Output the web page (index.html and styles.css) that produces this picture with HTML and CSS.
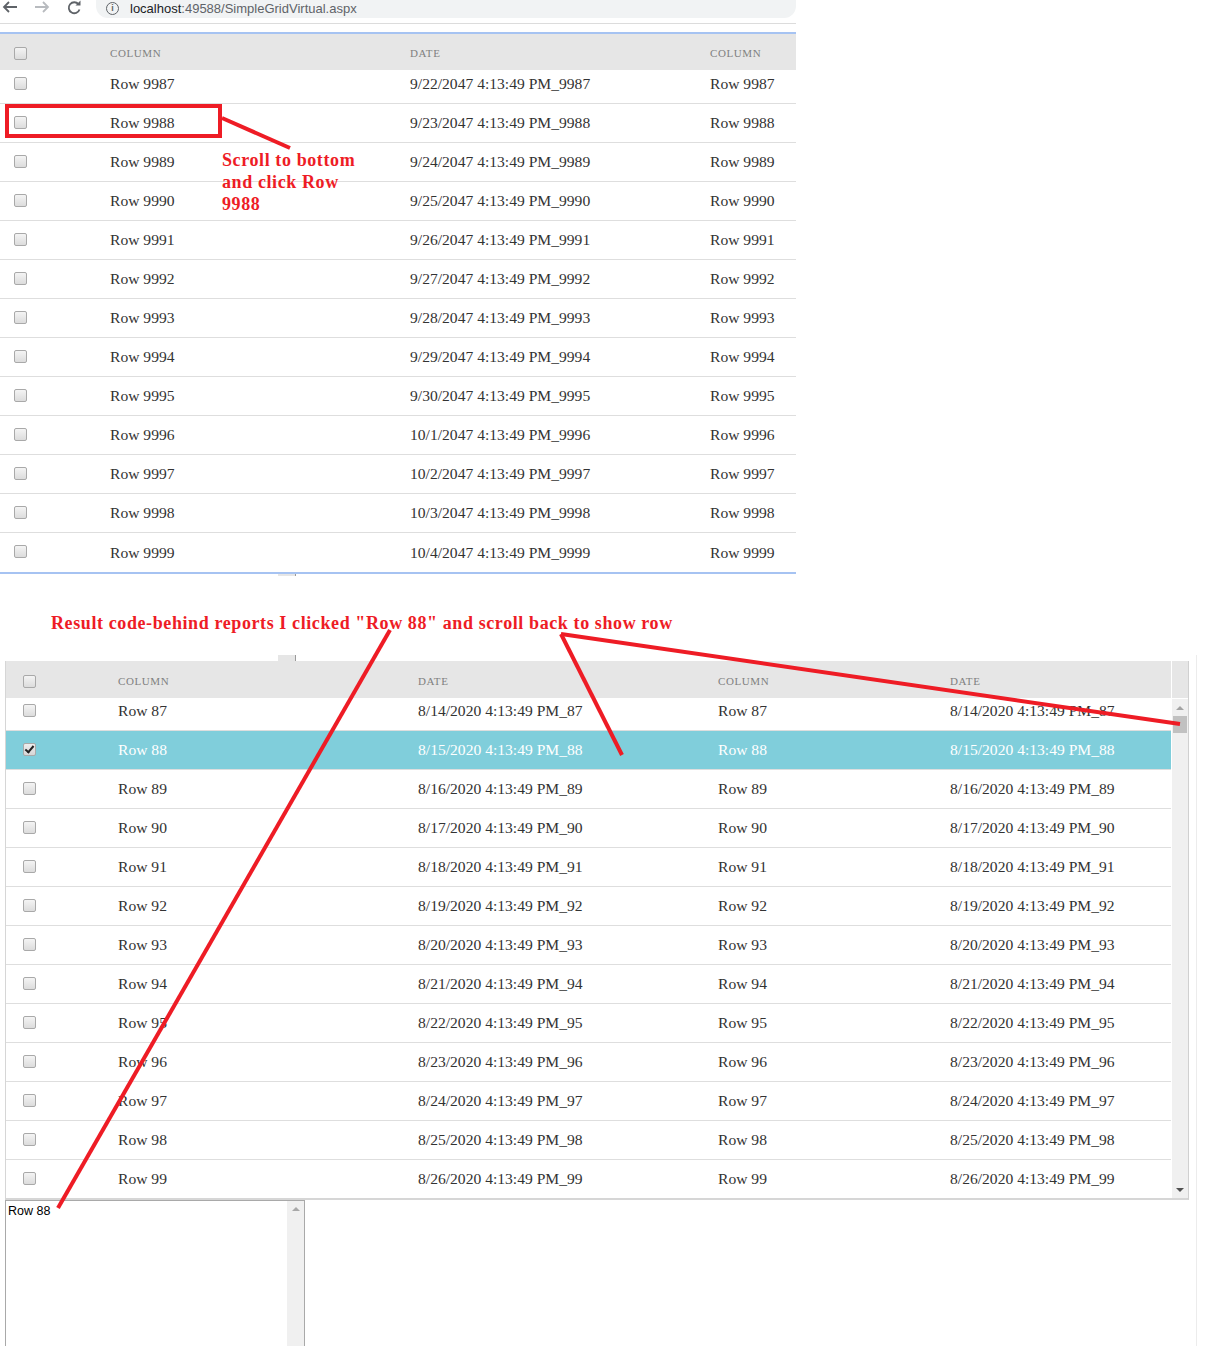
FILE: index.html
```html
<!DOCTYPE html>
<html>
<head>
<meta charset="utf-8">
<title>SimpleGridVirtual</title>
<link rel="stylesheet" href="styles.css">
</head>
<body>
<div class="page">
  <div class="chrome">
    <svg class="nav" width="90" height="20" viewBox="0 0 90 20">
      <path d="M17 7 H4 M9 2 L4 7 L9 12" fill="none" stroke="#5f6368" stroke-width="1.8"/>
      <path d="M35 7 H48 M43 2 L48 7 L43 12" fill="none" stroke="#b8bbbf" stroke-width="1.8"/>
      <path d="M78.5 4.2 A5.5 5.5 0 1 0 79.5 9.5" fill="none" stroke="#5f6368" stroke-width="1.8"/>
      <path d="M80.5 0.5 V5.5 H75.5 Z" fill="#5f6368"/>
    </svg>
    <div class="omnibox">
      <span class="info">i</span>
      <span class="url"><span class="host">localhost</span>:49588/SimpleGridVirtual.aspx</span>
    </div>
  </div>

  <div class="grid grid-one">
    <div class="head row">
      <span class="cell"><span class="cb"></span></span>
      <span class="cell hd">COLUMN</span>
      <span class="cell hd">DATE</span>
      <span class="cell hd">COLUMN</span>
    </div>
    <div class="body body-one">
      <div class="rows" id="rows1"></div>
    </div>
    <span class="tick tick-one"></span>
  </div>

  <div class="gap"></div>

  <div class="lower">
    <span class="tick tick-two"></span>
    <div class="grid grid-two">
      <div class="main">
        <div class="head row">
          <span class="cell"><span class="cb"></span></span>
          <span class="cell hd">COLUMN</span>
          <span class="cell hd">DATE</span>
          <span class="cell hd">COLUMN</span>
          <span class="cell hd">DATE</span>
        </div>
        <div class="body body-two">
          <div class="rows" id="rows2"></div>
        </div>
      </div>
      <div class="vscroll">
        <div class="vs-head"></div>
        <div class="vs-track">
          <span class="arr up"></span>
          <span class="thumb"></span>
          <span class="fill"></span>
          <span class="arr down"></span>
        </div>
      </div>
    </div>
    <div class="output">
      <div class="out-text">Row 88</div>
      <div class="out-scroll"><span class="arr up light"></span></div>
    </div>
  </div>

  <div class="note note-one">Scroll to bottom<br>and click Row<br>9988</div>
  <div class="note note-two">Result code-behind reports I clicked "Row 88" and scroll back to show row</div>

  <svg class="marks" width="1212" height="1346" viewBox="0 0 1212 1346">
    <g fill="none" stroke="#ee1c25" stroke-width="4">
      <rect x="7" y="106" width="213" height="30"/>
      <path d="M222 118 L290 148"/>
      <path d="M390 630 L58 1208"/>
      <path d="M561 634 L622 755"/>
      <path d="M561 634 L1180 724"/>
    </g>
  </svg>
</div>
<script src="app.js"></script>
</body>
</html>
```

FILE: app.js
```javascript
(function () {
  function row(cells, cls, checked) {
    var r = document.createElement('div');
    r.className = 'row data' + (cls ? ' ' + cls : '');
    var c0 = document.createElement('span');
    c0.className = 'cell';
    var cb = document.createElement('span');
    cb.className = 'cb' + (checked ? ' on' : '');
    c0.appendChild(cb);
    r.appendChild(c0);
    cells.forEach(function (t) {
      var s = document.createElement('span');
      s.className = 'cell txt';
      s.textContent = t;
      r.appendChild(s);
    });
    return r;
  }
  var r1 = document.getElementById('rows1');
  var d1 = new Date(2047, 8, 22);
  for (var i = 9987; i <= 9999; i++) {
    var d = new Date(d1.getTime());
    d.setDate(d1.getDate() + (i - 9987));
    var ds = (d.getMonth() + 1) + '/' + d.getDate() + '/' + d.getFullYear() + ' 4:13:49 PM_' + i;
    r1.appendChild(row(['Row ' + i, ds, 'Row ' + i]));
  }
  var r2 = document.getElementById('rows2');
  var d2 = new Date(2020, 7, 14);
  for (var j = 87; j <= 99; j++) {
    var e = new Date(d2.getTime());
    e.setDate(d2.getDate() + (j - 87));
    var es = (e.getMonth() + 1) + '/' + e.getDate() + '/' + e.getFullYear() + ' 4:13:49 PM_' + j;
    r2.appendChild(row(['Row ' + j, es, 'Row ' + j, es], j === 88 ? 'sel' : '', j === 88));
  }
})();
```

FILE: styles.css
```css
html, body {
  margin: 0;
  padding: 0;
  background: #fff;
}
.page {
  position: relative;
  width: 1212px;
  height: 1346px;
  overflow: hidden;
  font-family: "Liberation Serif", serif;
  color: #333;
}
.chrome {
  display: flex;
  align-items: flex-start;
  height: 24px;
  width: 796px;
  border-bottom: 1px solid #dcdcdc;
  box-sizing: border-box;
}
.nav {
  display: block;
  flex: none;
}
.omnibox {
  margin-left: 6px;
  width: 700px;
  height: 20px;
  margin-top: -2px;
  background: #f1f3f4;
  border-radius: 0 0 12px 12px;
  display: flex;
  align-items: center;
  font-family: "Liberation Sans", sans-serif;
  font-size: 13px;
  color: #5f6368;
}
.info {
  width: 11px;
  height: 11px;
  border: 1.5px solid #5f6368;
  border-radius: 50%;
  margin-left: 10px;
  margin-right: 11px;
  font-size: 9px;
  font-weight: bold;
  line-height: 11px;
  text-align: center;
  color: #5f6368;
}
.host { color: #202124; }

.grid-one {
  position: relative;
  margin-top: 8px;
  width: 796px;
  border-top: 2px solid #a6c3f2;
  border-bottom: 2px solid #a6c3f2;
}
.row {
  display: grid;
  align-items: center;
}
.grid-one .row { grid-template-columns: 110px 300px 300px 86px; }
.grid-two .row { grid-template-columns: 112px 300px 300px 232px 221px; }
.head {
  height: 36px;
  background: #e6e6e6;
}
.grid-two .head { height: 37px; }
.head .cb { margin-top: 3px; }
.hd {
  font-size: 11px;
  letter-spacing: 0.6px;
  color: #808080;
  padding-top: 2px;
}
.cell { white-space: nowrap; }
.cb {
  display: block;
  width: 11px;
  height: 11px;
  border: 1px solid #a9a9a9;
  border-radius: 2px;
  background: linear-gradient(#f4f4f4, #dcdcdc);
}
.grid-one .cb { margin-left: 14px; }
.grid-two .cb { margin-left: 17px; }
.cb.on {
  position: relative;
  background: linear-gradient(#eeeeee, #d6d6d6);
}
.cb.on::after {
  content: "";
  position: absolute;
  left: 3px;
  top: 0;
  width: 3px;
  height: 7px;
  border: solid #222;
  border-width: 0 2px 2px 0;
  transform: rotate(40deg);
}
.data {
  height: 39px;
  box-sizing: border-box;
  border-bottom: 1px solid #dedede;
  font-size: 15.6px;
  color: #333;
}
.data .cb { margin-top: -2px; }
.body { overflow: hidden; }
.body-one { height: 502px; }
.body-one .rows { margin-top: -5px; }
.body-one .data:last-child { border-bottom: none; }
.body-two { height: 500px; }
.body-two .rows { margin-top: -6px; }
.sel {
  background: #80cedb;
  color: #fff;
}
.tick {
  position: absolute;
  width: 17px;
  background: #e6e6e6;
  border-right: 1px solid #9a9a9a;
}
.tick-one { left: 278px; bottom: -4px; height: 2px; }
.gap { height: 81px; }

.lower {
  position: relative;
  width: 1197px;
  height: 691px;
  border-right: 1px solid #ececec;
  padding-top: 6px;
  box-sizing: border-box;
}
.tick-two { left: 278px; top: 0; height: 6px; }
.grid-two {
  margin-left: 5px;
  width: 1184px;
  display: flex;
  border-left: 1px solid #d6d6d6;
  border-right: 2px solid #d0d0d0;
  border-bottom: 2px solid #d6d6d6;
  box-sizing: border-box;
}
.main { width: 1165px; flex: none; }
.vscroll {
  width: 16px;
  flex: none;
  margin-left: 1px;
  display: flex;
  flex-direction: column;
}
.vs-head {
  height: 37px;
  background: #e6e6e6;
  border-bottom: 1px solid #fff;
}
.vs-track {
  flex: 1;
  background: #f0f0f0;
  display: flex;
  flex-direction: column;
  align-items: center;
}
.arr {
  width: 0;
  height: 0;
  border-left: 4px solid transparent;
  border-right: 4px solid transparent;
}
.arr.up {
  border-bottom: 4px solid #a3a3a3;
  margin-top: 7px;
}
.arr.down {
  border-top: 4px solid #505050;
  margin-bottom: 6px;
}
.thumb {
  width: 14px;
  height: 17px;
  background: #c1c1c1;
  margin-top: 6px;
}
.fill { flex: 1; }

.output {
  margin-left: 5px;
  width: 300px;
  height: 160px;
  border: 1px solid #a9a9a9;
  border-bottom: none;
  box-sizing: border-box;
  display: flex;
}
.out-text {
  flex: 1;
  padding: 3px 2px;
  font-family: "Liberation Sans", sans-serif;
  font-size: 12.5px;
  color: #000;
}
.out-scroll {
  width: 17px;
  background: #f0f0f0;
  display: flex;
  justify-content: center;
}
.arr.light { border-bottom-color: #a8a8a8; margin-top: 6px; }

.note {
  position: absolute;
  color: #ee1c25;
  font-family: "Liberation Serif", serif;
  font-weight: bold;
  font-size: 18px;
  letter-spacing: 0.6px;
  line-height: 22px;
}
.note-one { left: 222px; top: 149px; }
.note-two { left: 51px; top: 612px; white-space: nowrap; }
.marks {
  position: absolute;
  left: 0;
  top: 0;
  pointer-events: none;
}
```
